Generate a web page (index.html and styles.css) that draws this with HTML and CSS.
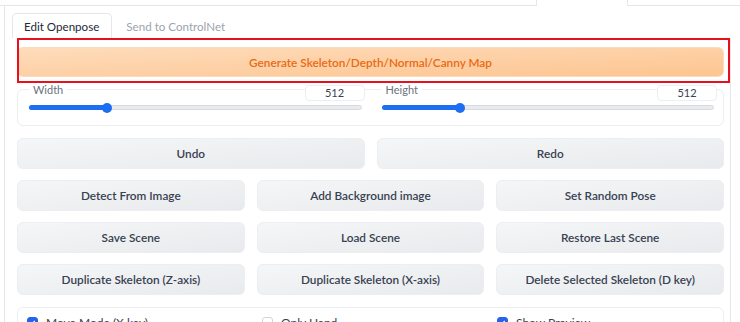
FILE: index.html
```html
<!DOCTYPE html>
<html lang="en">
<head>
  <meta charset="UTF-8">
  <title>Openpose Editor</title>
  <link rel="stylesheet" href="styles.css">
</head>
<body>
  <div class="top-nav">
    <span class="seg seg-left"></span>
    <span class="seg seg-selected"></span>
    <span class="seg seg-rest"></span>
  </div>

  <div class="outer-panel">
    <div class="tab-nav">
      <button class="tab active">Edit Openpose</button>
      <button class="tab">Send to ControlNet</button>
    </div>

    <div class="tab-panel">
      <div class="highlight"></div>

      <button class="btn primary">Generate Skeleton/Depth/Normal/Canny Map</button>

      <div class="slider-block">
        <div class="slider">
          <div class="slider-head">
            <span class="slider-label">Width</span>
            <span class="num-box">512</span>
          </div>
          <div class="track">
            <div class="fill" style="width: 23.4%"></div>
            <div class="thumb" style="left: 23.4%"></div>
          </div>
        </div>
        <div class="slider">
          <div class="slider-head">
            <span class="slider-label">Height</span>
            <span class="num-box">512</span>
          </div>
          <div class="track">
            <div class="fill" style="width: 23.4%"></div>
            <div class="thumb" style="left: 23.4%"></div>
          </div>
        </div>
      </div>

      <div class="btn-row two">
        <button class="btn">Undo</button>
        <button class="btn">Redo</button>
      </div>
      <div class="btn-row three">
        <button class="btn">Detect From Image</button>
        <button class="btn">Add Background image</button>
        <button class="btn">Set Random Pose</button>
      </div>
      <div class="btn-row three">
        <button class="btn">Save Scene</button>
        <button class="btn">Load Scene</button>
        <button class="btn">Restore Last Scene</button>
      </div>
      <div class="btn-row three">
        <button class="btn">Duplicate Skeleton (Z-axis)</button>
        <button class="btn">Duplicate Skeleton (X-axis)</button>
        <button class="btn">Delete Selected Skeleton (D key)</button>
      </div>

      <div class="check-block">
        <label class="check"><span class="box checked"></span>Move Mode (X key)</label>
        <label class="check"><span class="box"></span>Only Hand</label>
        <label class="check"><span class="box checked"></span>Show Preview</label>
      </div>
    </div>
  </div>
</body>
</html>
```

FILE: styles.css
```css
body {
  margin: 0;
  padding: 0;
  font-family: "Source Sans Pro", Lato, "Noto Sans", sans-serif;
  background: #fff;
  color: #374151;
  overflow: hidden;
}
button {
  font-family: inherit;
}
.top-nav {
  display: flex;
  height: 6px;
}
.seg {
  display: block;
  box-sizing: border-box;
}
.seg-left {
  width: 536px;
  border-bottom: 1px solid #e5e7eb;
}
.seg-selected {
  width: 92px;
  border-left: 1px solid #e5e7eb;
  border-right: 1px solid #e5e7eb;
}
.seg-rest {
  flex: 1;
  border-bottom: 1px solid #e5e7eb;
}
.outer-panel {
  margin-left: 4px;
  border-left: 1px solid #e5e7eb;
  padding-top: 7px;
}
.tab-nav {
  display: flex;
  padding-left: 7px;
  height: 25px;
}
.tab {
  background: none;
  border: 1px solid transparent;
  border-bottom: none;
  border-radius: 5px 5px 0 0;
  padding: 0 12px 0 11px;
  font-size: 11.6px;
  white-space: nowrap;
  color: #9ca3af;
  margin-right: 2px;
}
.tab.active {
  border-color: #e5e7eb;
  color: #1f2937;
}
.tab-panel {
  position: relative;
  width: 726px;
  box-sizing: border-box;
  padding: 9px 6px 0 12px;
  border-right: 1px solid #e5e7eb;
}
.highlight {
  position: absolute;
  left: 12px;
  top: 0;
  width: 713px;
  height: 45px;
  box-sizing: border-box;
  border: 2px solid #e8101c;
  pointer-events: none;
}
.btn {
  display: block;
  width: 100%;
  height: 31px;
  border: 1px solid #eceef1;
  border-radius: 6px;
  background: linear-gradient(to bottom right, #f5f6f7, #e8eaed);
  color: #374151;
  font-size: 11.8px;
  font-weight: 600;
  padding: 0;
}
.btn.primary {
  height: 30px;
  border-color: #fddcbb;
  background: linear-gradient(to bottom right, #fedcbc, #fdc590);
  color: #ea6a12;
}
.slider-block {
  display: flex;
  margin-top: 12px;
  border: 1px solid #eceef1;
  border-radius: 6px;
  height: 35px;
}
.slider {
  flex: 1;
  padding: 0 9px 0 11px;
}
.slider-head {
  display: flex;
  justify-content: space-between;
  align-items: flex-start;
  margin-top: -5px;
  height: 16px;
}
.slider-label {
  background: #fff;
  font-size: 11px;
  line-height: 10px;
  color: #6b7280;
  padding: 0 4px;
}
.num-box {
  box-sizing: border-box;
  width: 60px;
  height: 16px;
  margin-right: -3px;
  border: 1px solid #eceef1;
  border-radius: 4px;
  background: #fff;
  font-size: 11px;
  line-height: 14px;
  text-align: center;
  color: #374151;
}
.track {
  position: relative;
  margin-top: 4px;
  height: 5px;
  box-sizing: border-box;
  border: 1px solid #d6d9de;
  border-radius: 3px;
  background: #e9ebee;
}
.fill {
  position: absolute;
  left: -1px;
  top: -1px;
  height: 5px;
  border-radius: 3px;
  background: #1d6ef0;
}
.thumb {
  position: absolute;
  top: -3px;
  width: 10px;
  height: 10px;
  margin-left: -5px;
  border-radius: 50%;
  background: #1d6ef0;
}
.btn-row {
  display: grid;
  gap: 12px;
  margin-top: 11px;
}
.btn-row.two {
  grid-template-columns: 1fr 1fr;
  margin-top: 12px;
}
.btn-row.three {
  grid-template-columns: 1fr 1fr 1fr;
}
.check-block {
  display: grid;
  grid-template-columns: 1fr 1fr 1fr;
  margin-top: 12px;
  border: 1px solid #eceef1;
  border-radius: 6px;
  padding: 7px 0 10px;
}
.check {
  display: flex;
  align-items: center;
  gap: 8px;
  padding-left: 9px;
  font-size: 12px;
  color: #374151;
}
.box {
  box-sizing: border-box;
  width: 11px;
  height: 11px;
  border: 1px solid #d1d5db;
  border-radius: 3px;
  background: #fff;
}
.box.checked {
  border-color: #2563eb;
  background: #2563eb url("data:image/svg+xml;utf8,<svg xmlns='http://www.w3.org/2000/svg' viewBox='0 0 16 16'><path d='M4 8.5l2.5 2.5 5.5-6' fill='none' stroke='white' stroke-width='2'/></svg>") center / 100% no-repeat;
}
```
